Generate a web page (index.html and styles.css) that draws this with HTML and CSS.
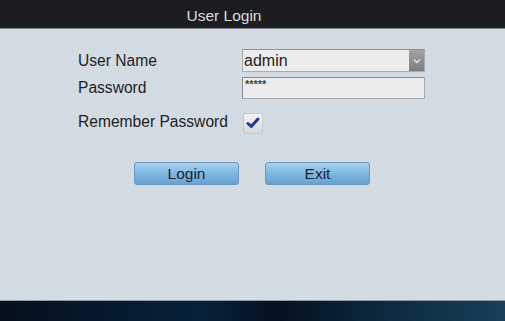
FILE: index.html
```html
<!DOCTYPE html>
<html lang="en">
  <head>
    <meta charset="UTF-8" />
    <title>User Login</title>
    <link rel="stylesheet" href="styles.css">
  </head>
  <body>
    <div class="window">
      <div class="title-bar">User Login</div>

      <div class="login-panel">
        <div class="form-grid">
          <label class="field-label">User Name</label>
          <div class="select-box">
            <span class="select-value">admin</span>
            <span class="select-arrow">
              <svg width="8" height="6" viewBox="0 0 8 6"><path d="M1 1.5 L4 4.5 L7 1.5" fill="none" stroke="#e4e4e4" stroke-width="1.4"/></svg>
            </span>
          </div>

          <label class="field-label">Password</label>
          <div class="text-box">*****</div>

          <label class="field-label remember">Remember Password</label>
          <div class="check-box">
            <svg width="14" height="12" viewBox="0 0 14 12"><path d="M2 6.5 L5.2 9.5 L12 2" fill="none" stroke="#1c3596" stroke-width="3" stroke-linecap="round" stroke-linejoin="round"/></svg>
          </div>
        </div>

        <div class="button-row">
          <button class="btn">Login</button>
          <button class="btn">Exit</button>
        </div>
      </div>

      <div class="status-bar"></div>
    </div>
  </body>
</html>
```

FILE: styles.css
```css
body {
  margin: 0;
  font-family: "Liberation Sans", Arial, sans-serif;
  background-color: #d3dbe3;
}
.window {
  width: 505px;
  height: 321px;
  display: flex;
  flex-direction: column;
  overflow: hidden;
}
.title-bar {
  height: 28px;
  line-height: 31px;
  background-color: #1c1d21;
  border-bottom: 1px solid #7d848c;
  color: #dcdcdc;
  font-size: 15.5px;
  text-align: center;
  padding-right: 57px;
}
.login-panel {
  flex: 1;
  background-color: #d3dbe3;
  padding: 20px 0 0 78px;
}
.form-grid {
  display: grid;
  grid-template-columns: 164px 183px;
  grid-template-rows: 23px 22px 21px;
  row-gap: 5px;
  align-items: center;
}
.field-label {
  font-size: 15.6px;
  color: #1e1e1e;
}
.remember {
  margin-top: 15px;
}
.select-box {
  height: 21px;
  border: 1px solid #a9acae;
  border-top-color: #8e9194;
  background-color: #ececec;
  display: flex;
  align-items: center;
}
.select-value {
  flex: 1;
  font-size: 16px;
  color: #222;
  padding-left: 1px;
}
.select-arrow {
  width: 15px;
  height: 21px;
  background: linear-gradient(#a3a3a3, #7c7c7c);
  display: flex;
  align-items: center;
  justify-content: center;
}
.text-box {
  height: 20px;
  border: 1px solid #a9acae;
  border-top-color: #8a8d90;
  border-left-color: #8a8d90;
  background-color: #ececec;
  font-size: 11px;
  font-weight: bold;
  line-height: 13px;
  color: #444;
  padding-left: 2px;
  box-sizing: content-box;
  width: 179px;
}
.check-box {
  margin-top: 17px;
  margin-left: 1px;
  width: 18px;
  height: 19px;
  border: 1px solid #c2c8ce;
  border-radius: 2px;
  background: linear-gradient(#f4f4f4, #d8d8d8);
  display: flex;
  align-items: center;
  justify-content: center;
}
.button-row {
  display: flex;
  gap: 26px;
  margin-top: 37px;
  padding-left: 56px;
}
.btn {
  width: 105px;
  height: 23px;
  border: 1px solid #6a98bf;
  border-radius: 3px;
  background: linear-gradient(#a9d2ee, #7fb6e0 50%, #66a3d3);
  font-family: "Liberation Sans", Arial, sans-serif;
  font-size: 15.5px;
  color: #1a2430;
  padding: 0;
  cursor: pointer;
}
.status-bar {
  height: 20px;
  border-top: 1px solid #8e9aa6;
  background: linear-gradient(90deg, #04101c 0%, #07213a 40%, #041220 55%, #0d2d44 80%, #173f58 100%);
}
```
